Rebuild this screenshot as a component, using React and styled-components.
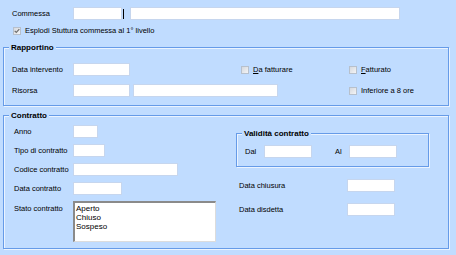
import React from 'react'
import styled, { createGlobalStyle } from 'styled-components'

const GlobalStyle = createGlobalStyle`
  html, body {
    margin: 0;
    padding: 0;
  }
  body {
    background: #c0dcff;
    font-family: "Liberation Sans", Arial, sans-serif;
    font-size: 7.5px;
    color: #000;
  }
`

const Page = styled.div`
  width: 456px;
  height: 255px;
  box-sizing: border-box;
  padding-top: 7px;
  display: flex;
  flex-direction: column;
  overflow: hidden;
`

const Row = styled.div`
  display: flex;
  align-items: ${(p) => (p.$top ? 'flex-start' : 'center')};
  min-height: 13px;
  padding-left: ${(p) => p.$indent || 0}px;
  margin-top: ${(p) => p.$mt || 0}px;
`

const Label = styled.span`
  flex-shrink: 0;
  width: ${(p) => p.$w}px;
  margin-left: ${(p) => p.$ml || 0}px;
  margin-top: ${(p) => p.$mt || 0}px;
  line-height: 13px;
  white-space: nowrap;
`

const Field = styled.div`
  flex-shrink: 0;
  box-sizing: border-box;
  width: ${(p) => p.$w}px;
  height: 13px;
  margin-left: ${(p) => p.$ml || 0}px;
  background: #fff;
  border: 1px solid #c6d6ee;
`

const Caret = styled.span`
  width: 1px;
  height: 10px;
  margin: 0 6px 0 1px;
  background: #000;
`

const CheckWrap = styled.label`
  display: flex;
  align-items: center;
  flex-shrink: 0;
  width: ${(p) => (p.$w ? `${p.$w}px` : 'auto')};
  margin-left: ${(p) => p.$ml || 0}px;
  line-height: 10px;
  white-space: nowrap;
`

const Box = styled.span`
  box-sizing: border-box;
  width: 8px;
  height: 8px;
  margin-right: 4px;
  border: 1px solid #b7c0cc;
  background: linear-gradient(135deg, #d6d9de, #f3f4f6);
  display: flex;
  align-items: center;
  justify-content: center;
`

const Group = styled.div`
  position: relative;
  box-sizing: border-box;
  width: ${(p) => p.$w}px;
  margin-left: ${(p) => p.$ml || 0}px;
  margin-top: ${(p) => p.$mt || 0}px;
  padding: ${(p) => p.$pad};
  border: 1px solid #669be8;
  box-shadow: 1px 1px 0 #eaf3ff, inset 1px 1px 0 #eaf3ff;
  display: flex;
  flex-direction: column;
  gap: ${(p) => p.$gap || 0}px;
`

const Title = styled.span`
  position: absolute;
  top: -6px;
  left: 5px;
  padding: 0 2px;
  background: #c0dcff;
  font-size: 8px;
  font-weight: bold;
  line-height: 11px;
`

const Columns = styled.div`
  display: flex;
`

const LeftCol = styled.div`
  box-sizing: border-box;
  width: 232px;
  padding-left: 10px;
  display: flex;
  flex-direction: column;
  gap: 6px;
`

const RightCol = styled.div`
  display: flex;
  flex-direction: column;
`

const ListBox = styled.div`
  box-sizing: border-box;
  width: 143px;
  height: 41px;
  padding: 1px 0 0 1px;
  background: #fff;
  border-style: solid;
  border-width: 2px 1px 1px 2px;
  border-color: #8a8a8a #dcdcdc #dcdcdc #8a8a8a;
  font-size: 8px;
`

const ListItem = styled.div`
  line-height: 9px;
`

function Check({ checked, children, w, ml }) {
  return (
    <CheckWrap $w={w} $ml={ml}>
      <Box>
        {checked && (
          <svg width="6" height="6" viewBox="0 0 6 6">
            <path d="M0.7 2.8 L2.3 4.4 L5.3 1.2" fill="none" stroke="#6e6e6e" strokeWidth="1.2" />
          </svg>
        )}
      </Box>
      <span>{children}</span>
    </CheckWrap>
  )
}

export default function App() {
  return (
    <>
      <GlobalStyle />
      <Page>
        <Row $indent={12}>
          <Label $w={61}>Commessa</Label>
          <Field $w={49} />
          <Caret />
          <Field $w={270} />
        </Row>
        <Row $indent={13} $mt={6} style={{ minHeight: 8 }}>
          <Check checked>Esplodi Stuttura commessa al 1° livello</Check>
        </Row>

        <Group $w={446} $ml={3} $mt={11} $pad="15px 0 8px 8px" $gap={8}>
          <Title>Rapportino</Title>
          <Row>
            <Label $w={61}>Data intervento</Label>
            <Field $w={57} />
            <Check w={108} ml={111}>
              <u>D</u>a fatturare
            </Check>
            <Check>
              <u>F</u>atturato
            </Check>
          </Row>
          <Row>
            <Label $w={61}>Risorsa</Label>
            <Field $w={57} />
            <Field $w={145} $ml={3} />
            <Check ml={71}>Inferiore a 8 ore</Check>
          </Row>
        </Group>

        <Group $w={446} $ml={3} $mt={9} $pad="9px 0 6px 0">
          <Title>Contratto</Title>
          <Columns>
            <LeftCol>
              <Row>
                <Label $w={59}>Anno</Label>
                <Field $w={25} />
              </Row>
              <Row>
                <Label $w={59}>Tipo di contratto</Label>
                <Field $w={32} />
              </Row>
              <Row>
                <Label $w={59}>Codice contratto</Label>
                <Field $w={105} />
              </Row>
              <Row>
                <Label $w={59}>Data contratto</Label>
                <Field $w={49} />
              </Row>
              <Row $top>
                <Label $w={59} $mt={1}>Stato contratto</Label>
                <ListBox>
                  <ListItem>Aperto</ListItem>
                  <ListItem>Chiuso</ListItem>
                  <ListItem>Sospeso</ListItem>
                </ListBox>
              </Row>
            </LeftCol>

            <RightCol>
              <Group $w={193} $mt={8} $pad="11px 0 8px 8px">
                <Title>Validità contratto</Title>
                <Row>
                  <Label $w={19}>Dal</Label>
                  <Field $w={48} />
                  <Label $w={14} $ml={23}>Al</Label>
                  <Field $w={48} />
                </Row>
              </Group>
              <Row $indent={3} $mt={12}>
                <Label $w={108}>Data chiusura</Label>
                <Field $w={48} />
              </Row>
              <Row $indent={3} $mt={11}>
                <Label $w={108}>Data disdetta</Label>
                <Field $w={48} />
              </Row>
            </RightCol>
          </Columns>
        </Group>
      </Page>
    </>
  )
}
